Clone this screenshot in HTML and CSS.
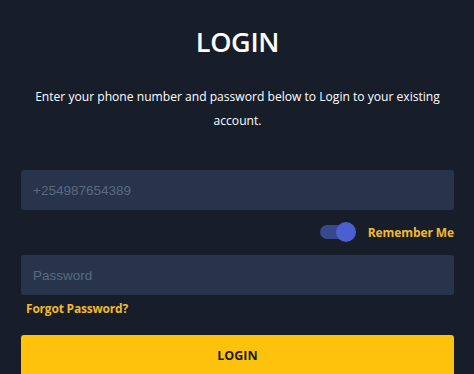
FILE: index.html
```html
<!DOCTYPE html>
<html>
<head>
<meta charset="utf-8">
<link rel="stylesheet" href="styles.css">
</head>
<body>
<div class="page">
  <h1 class="title">LOGIN</h1>
  <p class="intro">Enter your phone number and password below to Login to your existing account.</p>
  <form class="form">
    <input class="field" type="text" placeholder="+254987654389">
    <div class="remember">
      <span class="toggle"><span class="knob"></span></span>
      <span class="remember-label">Remember Me</span>
    </div>
    <input class="field" type="password" placeholder="Password">
    <a class="forgot">Forgot Password?</a>
    <button class="btn" type="button">LOGIN</button>
  </form>
</div>
</body>
</html>
```
FILE: styles.css
```css
html, body {
  margin: 0;
  padding: 0;
  background: #171e2a;
  height: 100%;
  overflow: hidden;
}
.page {
  padding: 0 20px 0 21px;
  font-family: "Open Sans", "Noto Sans", sans-serif;
  color: #fff;
}
.title {
  margin: 0;
  padding-top: 24px;
  text-align: center;
  font-size: 27px;
  font-weight: 600;
  line-height: 36px;
  letter-spacing: -0.3px;
}
.intro {
  margin: 25px 0 0;
  text-align: center;
  font-size: 12.1px;
  line-height: 24px;
  padding: 0;
}
.form {
  margin-top: 37px;
  display: flex;
  flex-direction: column;
}
.field {
  box-sizing: border-box;
  height: 40px;
  width: 100%;
  border: none;
  border-radius: 3px;
  background: #27344b;
  padding: 0 12px;
  font-family: "Liberation Sans", Arial, sans-serif;
  font-size: 13.5px;
  color: #fff;
  outline: none;
}
.field::placeholder {
  color: #5b6a82;
}
.remember {
  display: flex;
  justify-content: flex-end;
  align-items: center;
  gap: 12px;
  height: 45px;
  padding-bottom: 1px;
  box-sizing: border-box;
}
.toggle {
  position: relative;
  width: 30px;
  height: 14px;
  border-radius: 7px;
  background: #38488a;
  margin-right: 6px;
}
.knob {
  position: absolute;
  right: -6px;
  top: -3px;
  width: 20px;
  height: 20px;
  border-radius: 50%;
  background: #4b5fd1;
}
.remember-label {
  color: #f2b92c;
  font-weight: 700;
  font-size: 12px;
  letter-spacing: -0.1px;
}
.forgot {
  color: #f2b92c;
  font-weight: 700;
  font-size: 12px;
  letter-spacing: -0.2px;
  margin: 5px 0 0 5px;
  line-height: 18px;
}
.btn {
  margin-top: 17px;
  height: 42px;
  border: none;
  border-radius: 3px;
  background: #ffc20c;
  color: #1a1a1a;
  font-family: "Open Sans", sans-serif;
  font-weight: 700;
  font-size: 12.5px;
  padding-bottom: 2px;
}
```
